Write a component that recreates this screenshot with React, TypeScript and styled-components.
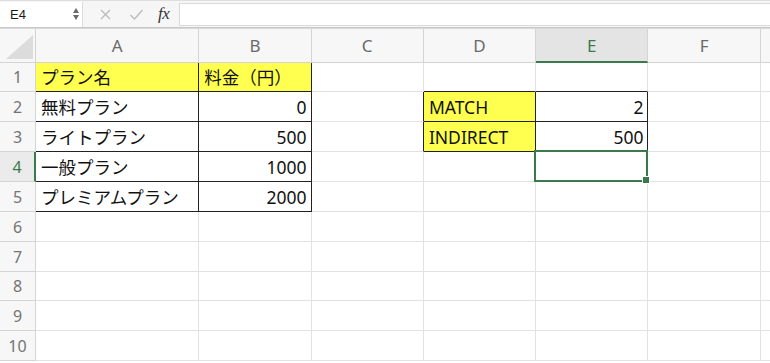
import styled, {createGlobalStyle} from "styled-components";

type Align = "left" | "right";

type CellData = {
  text: string;
  align?: Align;
  fill?: boolean;
};

const GlobalStyle = createGlobalStyle`
  html, body {
    margin: 0;
    padding: 0;
    background: #ffffff;
    overflow: hidden;
  }
  body {
    font-family: "Noto Sans", "Noto Sans CJK JP", sans-serif;
  }
`;

const green = "#3b7a4c";
const gridLine = "#e2e2e2";
const headLine = "#d4d4d4";
const boxLine = "#222222";
const rowHeight = 29.87;

const columns = ["A", "B", "C", "D", "E", "F", ""];
const selectedColumn = 4;
const selectedRow = 4;

const sheetData: Record<string, CellData> = {
  "1-0": {text: "プラン名", fill: true},
  "1-1": {text: "料金（円）", fill: true},
  "2-0": {text: "無料プラン"},
  "2-1": {text: "0", align: "right"},
  "3-0": {text: "ライトプラン"},
  "3-1": {text: "500", align: "right"},
  "4-0": {text: "一般プラン"},
  "4-1": {text: "1000", align: "right"},
  "5-0": {text: "プレミアムプラン"},
  "5-1": {text: "2000", align: "right"},
  "2-3": {text: "MATCH", fill: true},
  "2-4": {text: "2", align: "right"},
  "3-3": {text: "INDIRECT", fill: true},
  "3-4": {text: "500", align: "right"}
};

const isBoxed = (row: number, col: number) => Boolean(sheetData[`${row}-${col}`]);

/* ---------- formula bar ---------- */

const FormulaBar = styled.div`
  display: flex;
  align-items: center;
  height: 28px;
  background: #f6f6f6;
  border-top: 1px solid #dedede;
  border-bottom: 1px solid #c8c8c8;
  box-sizing: border-box;
`;

const NameBox = styled.div`
  display: flex;
  align-items: center;
  justify-content: space-between;
  width: 83px;
  height: 25px;
  padding: 0 3px 0 10px;
  box-sizing: border-box;
  background: #ffffff;
  border-right: 1px solid #dcdcdc;
  font-family: "Liberation Sans", "Noto Sans", sans-serif;
  font-size: 13px;
  color: #1a1a1a;
`;

const Stepper = styled.div`
  display: flex;
  flex-direction: column;
  gap: 2px;
`;

const Arrow = styled.span<{$down?: boolean}>`
  width: 0;
  height: 0;
  border-left: 3.5px solid transparent;
  border-right: 3.5px solid transparent;
  ${({$down}) =>
    $down ? "border-top: 5px solid #6a6a6a;" : "border-bottom: 5px solid #6a6a6a;"}
`;

const Tools = styled.div`
  display: flex;
  align-items: center;
  gap: 17px;
  padding: 0 0 0 16px;
  width: 96px;
  box-sizing: border-box;
`;

const Fx = styled.span`
  margin-left: -3px;
  font-family: "Liberation Serif", serif;
  font-style: italic;
  font-size: 17px;
  color: #333333;
  letter-spacing: -0.5px;
`;

const FormulaInput = styled.div`
  flex: 1;
  height: 21px;
  background: #ffffff;
  border: 1px solid #dadada;
  border-right: none;
`;

const CrossIcon = () => (
  <svg width="13" height="13" viewBox="0 0 13 13">
    <path d="M2 2 L11 11 M11 2 L2 11" stroke="#bcbcbc" strokeWidth="1.4" fill="none" />
  </svg>
);

const CheckIcon = () => (
  <svg width="15" height="13" viewBox="0 0 15 13">
    <path d="M1.5 7 L5.5 11 L13.5 2" stroke="#bcbcbc" strokeWidth="1.4" fill="none" />
  </svg>
);

/* ---------- sheet ---------- */

const Sheet = styled.div`
  display: grid;
  grid-template-columns: 36px 163.3px repeat(5, 112.3px) 1fr;
  grid-template-rows: 33.5px repeat(10, ${rowHeight}px);
  border-top: 1px solid #d8d8d8;
`;

const Corner = styled.div`
  display: flex;
  align-items: flex-end;
  justify-content: flex-end;
  padding: 0 2px 3px 0;
  background: #f7f7f7;
  border-right: 1px solid ${headLine};
  border-bottom: 1px solid ${headLine};
`;

const ColumnHeader = styled.div<{$active?: boolean}>`
  display: flex;
  align-items: center;
  justify-content: center;
  padding-top: 1px;
  background: ${({$active}) => ($active ? "#e4e4e4" : "#f7f7f7")};
  color: ${({$active}) => ($active ? green : "#6a6a6a")};
  border-right: 1px solid ${headLine};
  border-bottom: ${({$active}) => ($active ? `2px solid ${green}` : `1px solid ${headLine}`)};
  font-size: 17px;
`;

const RowHeader = styled.div<{$active?: boolean}>`
  display: flex;
  align-items: center;
  justify-content: center;
  padding-top: 1px;
  background: ${({$active}) => ($active ? "#ebebeb" : "#f7f7f7")};
  color: ${({$active}) => ($active ? green : "#747474")};
  border-right: ${({$active}) => ($active ? `2px solid ${green}` : `1px solid ${headLine}`)};
  border-bottom: 1px solid ${headLine};
  font-size: 16px;
`;

const Cell = styled.div<{
  $align: Align;
  $fill?: boolean;
  $rightDark?: boolean;
  $bottomDark?: boolean;
}>`
  position: relative;
  display: flex;
  align-items: center;
  justify-content: ${({$align}) => ($align === "right" ? "flex-end" : "flex-start")};
  padding: 2px 4px 0 5px;
  min-width: 0;
  white-space: nowrap;
  background: ${({$fill}) => ($fill ? "#ffff50" : "#ffffff")};
  border-right: 1px solid ${({$rightDark}) => ($rightDark ? boxLine : gridLine)};
  border-bottom: 1px solid ${({$bottomDark}) => ($bottomDark ? boxLine : gridLine)};
  font-size: 17.5px;
  line-height: 1;
  color: #111111;
`;

const Selection = styled.div`
  position: absolute;
  top: -2px;
  left: -2px;
  right: -1px;
  bottom: -1px;
  border: 2px solid ${green};
  pointer-events: none;
  z-index: 2;
`;

const FillHandle = styled.div`
  position: absolute;
  right: -4px;
  bottom: -4px;
  width: 6px;
  height: 6px;
  background: ${green};
  border: 1px solid #ffffff;
`;

const CornerTriangle = () => (
  <svg width="27" height="24" viewBox="0 0 27 24">
    <polygon points="0,24 27,24 27,0" fill="#dcdcdc" />
  </svg>
);

const renderCell = (row: number, col: number) => {
  const data = sheetData[`${row}-${col}`];
  const selected = row === selectedRow && col === selectedColumn;
  return (
    <Cell
      key={`${row}-${col}`}
      $align={data?.align ?? "left"}
      $fill={data?.fill}
      $rightDark={isBoxed(row, col) || isBoxed(row, col + 1)}
      $bottomDark={isBoxed(row, col) || isBoxed(row + 1, col)}
    >
      {data?.text}
      {selected && (
        <Selection>
          <FillHandle />
        </Selection>
      )}
    </Cell>
  );
};

const renderRow = (row: number) => [
  <RowHeader key={`h-${row}`} $active={row === selectedRow}>
    {row}
  </RowHeader>,
  ...columns.map((_, col) => renderCell(row, col))
];

const App = () => (
  <>
    <GlobalStyle />
    <FormulaBar>
      <NameBox>
        E4
        <Stepper>
          <Arrow />
          <Arrow $down />
        </Stepper>
      </NameBox>
      <Tools>
        <CrossIcon />
        <CheckIcon />
        <Fx>fx</Fx>
      </Tools>
      <FormulaInput />
    </FormulaBar>
    <Sheet>
      <Corner>
        <CornerTriangle />
      </Corner>
      {columns.map((name, col) => (
        <ColumnHeader key={col} $active={col === selectedColumn}>
          {name}
        </ColumnHeader>
      ))}
      {Array.from({length: 10}).flatMap((_, i) => renderRow(i + 1))}
    </Sheet>
  </>
);

export default App;
